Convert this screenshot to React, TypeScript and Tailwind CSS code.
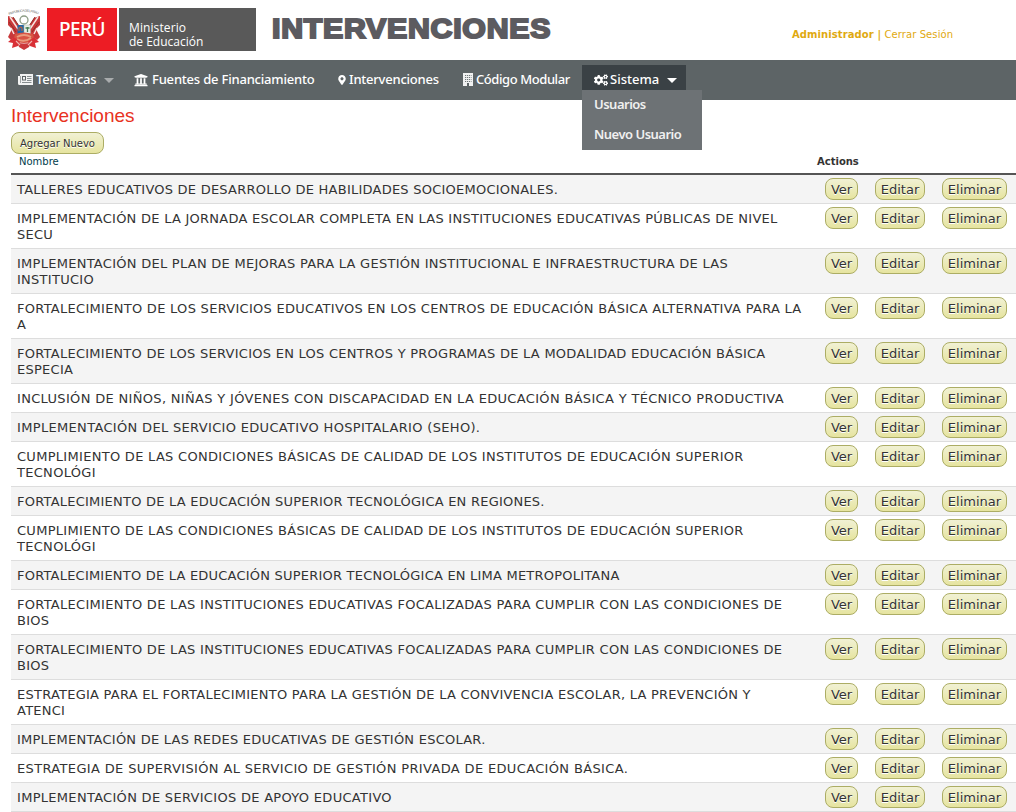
import React from "react";
import { FaCogs, FaMapMarkerAlt, FaUniversity } from "react-icons/fa";

const rows: { lines: string[]; tracking: string }[] = [
  { tracking: "tracking-[0.235px]", lines: ["TALLERES EDUCATIVOS DE DESARROLLO DE HABILIDADES SOCIOEMOCIONALES."] },
  { tracking: "tracking-[0.26px]", lines: ["IMPLEMENTACIÓN DE LA JORNADA ESCOLAR COMPLETA EN LAS INSTITUCIONES EDUCATIVAS PÚBLICAS DE NIVEL", "SECU"] },
  { tracking: "tracking-[0.27px]", lines: ["IMPLEMENTACIÓN DEL PLAN DE MEJORAS PARA LA GESTIÓN INSTITUCIONAL E INFRAESTRUCTURA DE LAS", "INSTITUCIO"] },
  { tracking: "tracking-[0.285px]", lines: ["FORTALECIMIENTO DE LOS SERVICIOS EDUCATIVOS EN LOS CENTROS DE EDUCACIÓN BÁSICA ALTERNATIVA PARA LA", "A"] },
  { tracking: "tracking-[0.26px]", lines: ["FORTALECIMIENTO DE LOS SERVICIOS EN LOS CENTROS Y PROGRAMAS DE LA MODALIDAD EDUCACIÓN BÁSICA", "ESPECIA"] },
  { tracking: "tracking-[0.325px]", lines: ["INCLUSIÓN DE NIÑOS, NIÑAS Y JÓVENES CON DISCAPACIDAD EN LA EDUCACIÓN BÁSICA Y TÉCNICO PRODUCTIVA"] },
  { tracking: "tracking-[0.33px]", lines: ["IMPLEMENTACIÓN DEL SERVICIO EDUCATIVO HOSPITALARIO (SEHO)."] },
  { tracking: "tracking-[0.295px]", lines: ["CUMPLIMIENTO DE LAS CONDICIONES BÁSICAS DE CALIDAD DE LOS INSTITUTOS DE EDUCACIÓN SUPERIOR", "TECNOLÓGI"] },
  { tracking: "tracking-[0.23px]", lines: ["FORTALECIMIENTO DE LA EDUCACIÓN SUPERIOR TECNOLÓGICA EN REGIONES."] },
  { tracking: "tracking-[0.295px]", lines: ["CUMPLIMIENTO DE LAS CONDICIONES BÁSICAS DE CALIDAD DE LOS INSTITUTOS DE EDUCACIÓN SUPERIOR", "TECNOLÓGI"] },
  { tracking: "tracking-[0.215px]", lines: ["FORTALECIMIENTO DE LA EDUCACIÓN SUPERIOR TECNOLÓGICA EN LIMA METROPOLITANA"] },
  { tracking: "tracking-[0.285px]", lines: ["FORTALECIMIENTO DE LAS INSTITUCIONES EDUCATIVAS FOCALIZADAS PARA CUMPLIR CON LAS CONDICIONES DE", "BIOS"] },
  { tracking: "tracking-[0.285px]", lines: ["FORTALECIMIENTO DE LAS INSTITUCIONES EDUCATIVAS FOCALIZADAS PARA CUMPLIR CON LAS CONDICIONES DE", "BIOS"] },
  { tracking: "tracking-[0.245px]", lines: ["ESTRATEGIA PARA EL FORTALECIMIENTO PARA LA GESTIÓN DE LA CONVIVENCIA ESCOLAR, LA PREVENCIÓN Y", "ATENCI"] },
  { tracking: "tracking-[0.24px]", lines: ["IMPLEMENTACIÓN DE LAS REDES EDUCATIVAS DE GESTIÓN ESCOLAR."] },
  { tracking: "tracking-[0.35px]", lines: ["ESTRATEGIA DE SUPERVISIÓN AL SERVICIO DE GESTIÓN PRIVADA DE EDUCACIÓN BÁSICA."] },
  { tracking: "tracking-[0.3px]", lines: ["IMPLEMENTACIÓN DE SERVICIOS DE APOYO EDUCATIVO"] },
];

const button =
  "flex h-[22px] shrink-0 items-center justify-center whitespace-nowrap rounded-[8px] border border-[#acad64] bg-linear-to-b from-[#f1f1d4] to-[#e6e49f] pt-px [text-shadow:0_1px_0_#fff]";

function CoatOfArms() {
  return (
    <svg width="34" height="42" viewBox="0 0 34 42" className="mt-[9px] shrink-0">
      <defs>
        <path id="motto" d="M2 6 Q17 -0.5 33 6" />
      </defs>
      <text fontSize="3.4" fill="#666" fontFamily="Liberation Sans, sans-serif">
        <textPath href="#motto" textLength="30">REPUBLICA DEL PERU</textPath>
      </text>
      <path d="M1 7L7 9L12 17V25L4 31L1 28L5 20L1 16Z" fill="#c9383a" />
      <path d="M33 7L27 9L22 17V25L30 31L33 28L29 20L33 16Z" fill="#c9383a" />
      <path d="M3 8L11 20M31 8L23 20M4 19L7 25M30 19L27 25" stroke="#f6e4df" strokeWidth="1.5" fill="none" />
      <path d="M6 8L12 17M28 8L22 17M2 13L9 23M32 13L25 23" stroke="#8f3029" strokeWidth="1" />
      <circle cx="17" cy="11" r="4" fill="#fff" stroke="#8d9d86" strokeWidth="1.3" />
      <path d="M10.5 16H17V25H10.5Z" fill="#2567a4" />
      <path d="M17 16H23.5V25H17Z" fill="#e8efe8" stroke="#a9b5a7" strokeWidth="0.5" />
      <path d="M12 22V19L14 18L15 19V22" stroke="#b56240" strokeWidth="1.2" fill="none" />
      <path d="M20.5 23V18M18.5 19H22.5" stroke="#497e56" strokeWidth="1.3" />
      <path d="M8 25Q17 22 26 25L27 29Q25 34 17 34Q9 34 7 29Z" fill="#d85443" />
      <path d="M10 28Q17 24 24 28M10 30Q17 34 24 29" stroke="#e99b7d" strokeWidth="2" fill="none" />
      <path d="M7 28L1 33L6 34L5 39L11 37L13 33ZM27 28L32 33L28 34L29 39L23 37L21 33Z" fill="#d93036" />
      <path d="M10 33Q17 36 24 33L22 38L17 41L12 38Z" fill="#cb383b" />
      <path d="M9 32L13 36M25 32L21 36" stroke="#f1b6ae" strokeWidth="1.1" />
    </svg>
  );
}

function NewspaperIcon() {
  return (
    <svg width="15" height="11" viewBox="0 0 15 11" className="mr-[3px]">
      <path d="M2 0H15V11H1.5Q0 11 0 9.5V2H2Z" fill="#f2f3f3" />
      <path d="M2.5 2V9" stroke="#8d9394" strokeWidth="0.8" />
      <path d="M4 2H8V6.5H4Z" fill="#5d6466" />
      <path d="M5 3H7V5.5H5Z" fill="#f2f3f3" />
      <path d="M9 2.5H13.5M9 4.5H13.5M9 6.5H13.5M4 8.5H13.5" stroke="#7b8284" strokeWidth="0.9" />
    </svg>
  );
}

function BuildingIcon() {
  return (
    <svg width="12" height="13" viewBox="0 0 12 13" className="mr-[2px]">
      <path d="M1 0H11V13H1Z" fill="#f0f1f1" />
      <path d="M3 2.5H9.5M3 4.5H9.5M3 6.5H9.5M3 8.5H9.5" stroke="#6f7678" strokeDasharray="1.2 0.8" />
      <path d="M5 10H7V13H5Z" fill="#5d6466" />
    </svg>
  );
}

function Caret({ className }: { className: string }) {
  return (
    <svg width="10" height="5" viewBox="0 0 10 5" className={className}>
      <path d="M0 0H10L5 5Z" fill="currentColor" />
    </svg>
  );
}

export default function App() {
  return (
    <div className="h-[812px] w-[1016px] overflow-hidden bg-white font-['DejaVu_Sans',sans-serif] text-[13px] text-[#333]">
      <header className="flex h-[60px] pl-[7px]">
        <CoatOfArms />
        <div className="ml-[6px] mt-[8px] flex h-[43px] w-[70px] items-center justify-center bg-[#ed1c24] font-['Noto_Sans',sans-serif] text-[19px] font-medium tracking-[-0.5px] text-white">
          <span>PERÚ</span>
        </div>
        <div className="ml-[2px] mt-[8px] h-[43px] w-[137px] bg-[#595959] pl-[10px] pt-[13px] font-['Open_Sans',sans-serif] text-[12px] leading-[14px] text-white">
          <div className="tracking-[0.1px]">Ministerio</div>
          <div>de Educación</div>
        </div>
        <h1 className="ml-[16px] mt-[12px] w-[521px] origin-left scale-x-[1.1] whitespace-nowrap font-['Liberation_Sans',sans-serif] text-[27.5px] leading-[34px] font-black tracking-[0.7px] text-[#5c5b60] [-webkit-text-stroke:2px_#5c5b60]">
          INTERVENCIONES
        </h1>
        <div className="-ml-px mt-[28px] whitespace-nowrap text-[10px] leading-[13px] tracking-[0.09px] text-[#dfa910]">
          <b>Administrador |</b> Cerrar Sesión
        </div>
      </header>

      <nav className="ml-[6px] flex h-[40px] bg-[#5d6466] pt-[5px] font-['Noto_Sans',sans-serif] text-[13px] font-medium text-white">
        <a className="flex h-[29px] w-[117px] items-center pl-[12px] whitespace-nowrap">
          <NewspaperIcon />
          <span className="w-[61px] tracking-[-0.2px]">Temáticas</span>
          <Caret className="ml-[7px] mt-[2px] text-[#a9acad]" />
        </a>
        <a className="flex h-[29px] w-[204px] items-center pl-[11px] whitespace-nowrap">
          <FaUniversity size={14} className="mr-[4px]" />
          <span className="tracking-[-0.2px]">Fuentes de Financiamiento</span>
        </a>
        <a className="flex h-[29px] w-[124px] items-center pl-[10px] whitespace-nowrap">
          <FaMapMarkerAlt size={10} className="mr-[2px]" />
          <span className="tracking-[-0.22px]">Intervenciones</span>
        </a>
        <a className="flex h-[29px] w-[131px] items-center pl-[11px] whitespace-nowrap">
          <BuildingIcon />
          <span className="tracking-[-0.42px]">Código Modular</span>
        </a>
        <div className="relative h-[25px] w-[104px] bg-[#3a4145]">
          <a className="flex h-[29px] items-center pl-[12px] whitespace-nowrap">
            <FaCogs size={14} className="mr-[2px]" />
            <span>Sistema</span>
            <Caret className="ml-[8px] mt-[2px]" />
          </a>
          <div className="absolute top-[25px] left-0 h-[60px] w-[120px] bg-[#6d7275] pl-[12px] font-semibold text-[#f0f0f0]">
            <div className="h-[30px] leading-[28px] tracking-[-0.5px]">Usuarios</div>
            <div className="h-[30px] leading-[28px] tracking-[-0.5px]">Nuevo Usuario</div>
          </div>
        </div>
      </nav>

      <main className="pl-[11px]">
        <h2 className="h-[32px] pt-[4px] font-['Liberation_Sans',sans-serif] text-[19px] leading-[24px] text-[#e8321f]">Intervenciones</h2>
        <button className={`${button} w-[93px] text-[10px]`}>Agregar Nuevo</button>
        <div className="flex h-[21px] border-b-2 border-[#555] text-[10px] leading-[15px]">
          <div className="w-[806px] pl-[8px] text-[#003d4c]">Nombre</div>
          <div className="font-bold">Actions</div>
        </div>
        {rows.map(({ lines, tracking }, i) => (
          <div key={i} className={`flex border-b border-[#ddd] ${i % 2 === 0 ? "bg-[#f4f4f4]" : "bg-white"}`}>
            <div className={`w-[814px] shrink-0 pt-[7px] pb-[5px] pl-[6px] leading-[16px] whitespace-nowrap ${tracking}`}>
              {lines.map((line) => (
                <div key={line}>{line}</div>
              ))}
            </div>
            <div className="flex pt-[3px]">
              <button className={`${button} w-[33px]`}>Ver</button>
              <button className={`${button} ml-[17px] w-[50px]`}>Editar</button>
              <button className={`${button} ml-[17px] w-[65px]`}>Eliminar</button>
            </div>
          </div>
        ))}
      </main>
    </div>
  );
}
